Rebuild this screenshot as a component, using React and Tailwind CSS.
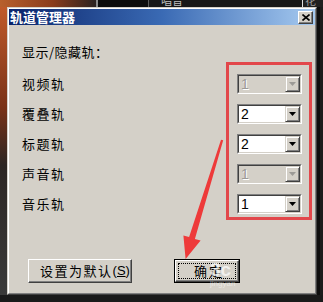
const tracks = [
  { name: "视频轨", value: "1", disabled: true },
  { name: "覆叠轨", value: "2" },
  { name: "标题轨", value: "2" },
  { name: "声音轨", value: "1", disabled: true },
  { name: "音乐轨", value: "1" },
];

function Combo({ value, disabled }) {
  return (
    <div className="h-[20px] w-[65px] border border-t-[#808080] border-l-[#808080] border-b-white border-r-white">
      <div
        className={`flex h-full border border-t-[#404040] border-l-[#404040] border-b-[#d4d0c8] border-r-[#d4d0c8] ${
          disabled ? "bg-[#d4d0c8]" : "bg-white"
        }`}
      >
        <div
          className={`flex-1 pl-[2px] text-[14px] leading-[16px] [font-family:'Liberation_Sans',sans-serif] ${
            disabled ? "text-[#9c9a96] [text-shadow:1px_1px_0_#fff]" : "text-black"
          }`}
        >
          {value}
        </div>
        <div className="flex w-[15px] items-center justify-center border border-t-[#d4d0c8] border-l-[#d4d0c8] border-b-[#404040] border-r-[#404040] bg-[#d4d0c8] shadow-[inset_1px_1px_0_#fff,inset_-1px_-1px_0_#808080]">
          <svg width="7" height="4" viewBox="0 0 7 4">
            <polygon points="0,0 7,0 3.5,4" fill={disabled ? "#9c9a96" : "#000"} />
          </svg>
        </div>
      </div>
    </div>
  );
}

export default function App() {
  return (
    <div className="relative flex h-[302px] w-[323px] flex-col overflow-hidden bg-[#1c1c1c] [font-family:'Noto_Sans_CJK_SC',sans-serif]">
      {/* background app, top strip */}
      <div className="flex h-[7px] shrink-0">
        <div className="w-[96px] bg-[linear-gradient(90deg,#b8602c,#8a3c1c_55%,#2a2220)]" />
        <div className="w-[2px] bg-[#8a8a8a]" />
        <div className="w-[50px] bg-[#0c0c0c]" />
        <div className="w-[1px] bg-[#5a5a5a]" />
        <div className="flex-1 overflow-hidden bg-[#181818] pl-[12px]">
          <div className="-mt-[6px] text-[11px] leading-[12px] text-[#bdbdbd]">唱音</div>
        </div>
        <div className="w-[1px] bg-[#e0e0e0]" />
        <div className="w-[20px] overflow-hidden bg-[#202020] pl-[2px]">
          <div className="-mt-[6px] text-[11px] leading-[12px] text-[#9a9a9a]">花方</div>
        </div>
      </div>

      <div className="flex h-[288px] shrink-0">
        {/* left strip */}
        <div className="w-[7px] bg-[linear-gradient(180deg,#c05a2a,#7a3218_35%,#2c2624_55%,#3a3a3a)]" />

        {/* dialog */}
        <div className="w-[310px] border border-t-[#d4d0c8] border-l-[#d4d0c8] border-b-[#404040] border-r-[#404040]">
          <div className="flex h-full flex-col border border-t-white border-l-white border-b-[#808080] border-r-[#808080] bg-[#d4d0c8]">
            {/* title bar */}
            <div className="flex h-[16px] shrink-0 items-center justify-between bg-[linear-gradient(90deg,#0a246a,#3a6ab4_50%,#a6caf0)] pl-[1px] pr-[2px]">
              <span className="text-[13px] leading-[16px] font-bold text-white">轨道管理器</span>
              <div className="flex h-[13px] w-[15px] items-center justify-center border border-t-white border-l-white border-b-[#404040] border-r-[#404040] bg-[#d4d0c8] shadow-[inset_-1px_-1px_0_#808080]">
                <svg width="8" height="7" viewBox="0 0 8 7">
                  <path d="M0.5 0.5 L7.5 6.5 M7.5 0.5 L0.5 6.5" stroke="#000" strokeWidth="1.6" />
                </svg>
              </div>
            </div>

            {/* body */}
            <div className="flex flex-1 flex-col pl-[13px] pr-[13px] pt-[19px] text-[13px] text-black">
              <div className="leading-[16px] tracking-[0.5px]">显示/隐藏轨：</div>

              <div className="mt-[14px] flex flex-col gap-[10px]">
                {tracks.map((t) => (
                  <div key={t.name} className="flex h-[20px] items-center justify-between">
                    <span className="leading-[16px] tracking-[1.5px]">{t.name}</span>
                    <Combo value={t.value} disabled={t.disabled} />
                  </div>
                ))}
              </div>

              <div className="mt-[45px] flex gap-[42px] pl-[6px]">
                <button className="flex h-[24px] w-[104px] items-center justify-center whitespace-nowrap border border-t-white border-l-white border-b-[#404040] border-r-[#404040] bg-[#d4d0c8] pl-[10px] text-[13px] leading-[16px] tracking-[1.5px] text-black shadow-[inset_-1px_-1px_0_#808080]">
                  设置为默认<span className="tracking-normal [font-family:'Liberation_Sans',sans-serif]">(<span className="underline">S</span>)</span>
                </button>
                <button className="h-[24px] w-[66px] border border-black bg-[#d4d0c8] p-0">
                  <div className="h-full border border-t-white border-l-white border-b-[#404040] border-r-[#404040] p-[2px] shadow-[inset_-1px_-1px_0_#808080]">
                    <div className="flex h-full items-center justify-center border border-dotted border-black pl-[4px] text-[13px] leading-[14px] tracking-[2px] text-black">
                      确定
                    </div>
                  </div>
                </button>
              </div>
            </div>
          </div>
        </div>

        {/* right strip */}
        <div className="flex w-[6px] flex-col">
          <div className="w-[3px] flex-1 bg-[#0e0e0e]" />
        </div>
      </div>

      {/* background app, bottom strip */}
      <div className="h-[7px] shrink-0 bg-[#1a1a1a]" />

      {/* annotation: red box around the selects */}
      <div className="pointer-events-none absolute left-[226px] top-[62px] h-[158px] w-[86px] border-[3px] border-[#e2474b]" />

      {/* annotation: red arrow */}
      <svg className="pointer-events-none absolute left-0 top-0" width="323" height="302" viewBox="0 0 323 302">
        <polygon
          points="221,139.7 223.2,140.3 194.9,238.9 200.6,240.6 185.6,259 183.4,235.4 189.1,237.1"
          fill="#ee3a3a"
        />
      </svg>

      {/* watermark */}
      <div className="pointer-events-none absolute left-[210px] top-[260px] flex flex-col items-start">
        <span className="text-[19px] leading-[20px] font-bold text-white/70 [font-family:'Liberation_Sans',sans-serif]">3c</span>
        <span className="-mt-[1px] text-[8px] leading-[9px] text-white/50 [font-family:'Liberation_Sans',sans-serif]">jingyan</span>
      </div>
    </div>
  );
}
